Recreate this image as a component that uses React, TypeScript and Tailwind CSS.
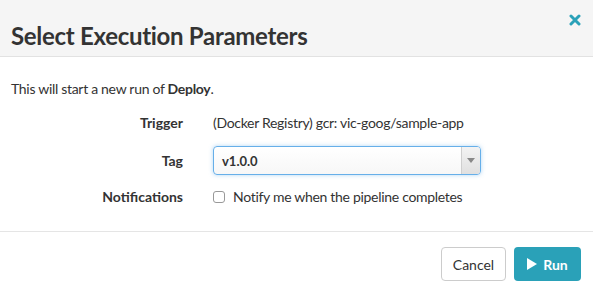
import React from "react";

export default function App() {
  return (
    <div className="w-[593px] h-[295px] bg-white text-[#333] overflow-hidden font-['Lato',sans-serif]">
      {/* Header */}
      <div className="h-[57px] bg-[#f5f5f5] border-b border-[#e2e2e2] flex items-start justify-between pl-[11px] pr-[12px]">
        <h1 className="text-[24px] font-bold leading-none mt-[24px] tracking-[-0.3px] text-[#333]">
          Select Execution Parameters
        </h1>
        <button className="mt-[14px] text-[#2aa1b8]">
          <svg width="12" height="12" viewBox="0 0 12 12">
            <path d="M2 2 L10 10 M10 2 L2 10" stroke="currentColor" strokeWidth="3" strokeLinecap="round" />
          </svg>
        </button>
      </div>

      {/* Body */}
      <div className="h-[175px] border-b border-[#e5e5e5] pl-[11px] pt-[22px] text-[14px] leading-[20px] tracking-[-0.3px]">
        <p>
          This will start a new run of <span className="font-bold">Deploy</span>.
        </p>

        <div className="mt-[14px] flex items-center">
          <div className="w-[172px] text-right font-bold tracking-normal">Trigger</div>
          <div className="ml-[30px]">(Docker Registry) gcr: vic-goog/sample-app</div>
        </div>

        <div className="mt-[13px] flex items-center">
          <div className="w-[172px] text-right font-bold tracking-normal">Tag</div>
          <div className="ml-[30px] w-[268px] h-[29px] rounded-[4px] border border-[#66afe9] shadow-[0_0_4px_rgba(102,175,233,0.5)] flex bg-gradient-to-b from-white to-[#f7f7f7]">
            <div className="flex-1 flex items-center pl-[8px] text-[13px] font-bold tracking-normal">v1.0.0</div>
            <div className="w-[19px] border-l border-[#cfcfcf] bg-gradient-to-b from-[#f3f3f3] to-[#e0e0e0] rounded-r-[3px] flex items-center justify-center">
              <svg width="8" height="5" viewBox="0 0 8 5">
                <path d="M0 0 L8 0 L4 5 Z" fill="#888" />
              </svg>
            </div>
          </div>
        </div>

        <div className="mt-[12px] flex items-center">
          <div className="w-[172px] text-right font-bold tracking-normal">Notifications</div>
          <label className="ml-[30px] flex items-center gap-[8px]">
            <span className="w-[12px] h-[12px] border border-[#999] rounded-[3px] bg-white" />
            Notify me when the pipeline completes
          </label>
        </div>
      </div>

      {/* Footer */}
      <div className="flex justify-end gap-[8px] pr-[12px] pt-[15px]">
        <button className="h-[34px] w-[65px] border border-[#ccc] rounded-[4px] bg-white text-[14px] text-[#333]">
          Cancel
        </button>
        <button className="h-[34px] w-[67px] justify-center rounded-[4px] bg-[#2aa1b8] text-white text-[14px] font-bold flex items-center gap-[6px]">
          <svg width="10" height="12" viewBox="0 0 10 12">
            <path d="M0 0 L10 6 L0 12 Z" fill="white" />
          </svg>
          Run
        </button>
      </div>
    </div>
  );
}
